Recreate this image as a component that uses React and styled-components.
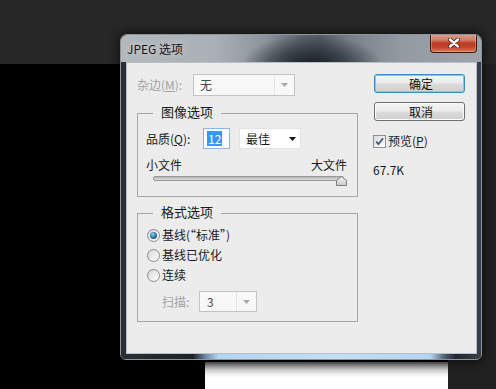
import React from "react";
import styled, { createGlobalStyle } from "styled-components";

const Global = createGlobalStyle`
  *, *::before, *::after { box-sizing: border-box; }
  html, body { margin: 0; padding: 0; background: #232323; }
  body {
    font-family: "Noto Sans CJK SC", "Noto Sans", sans-serif;
    font-size: 12px;
    color: #1a1a1a;
  }
`;

const Stage = styled.div`
  position: relative;
  width: 496px;
  height: 389px;
  overflow: hidden;
  display: flex;
  flex-direction: column;
  background: #232323;
`;

const TopBand = styled.div`
  flex: none;
  height: 64px;
  background: #272727;
`;

const MainRow = styled.div`
  flex: 1;
  display: flex;
`;

const Canvas = styled.div`
  width: 448px;
  background: #000;
  display: flex;
  flex-direction: column;
  justify-content: flex-end;
  align-items: flex-end;
`;

const Doc = styled.div`
  width: 243px;
  height: 27px;
  background: linear-gradient(
    to bottom,
    #5a5a5a 0px,
    #8e8e8e 3px,
    #cfcfcf 8px,
    #f3f3f3 13px,
    #ffffff 16px
  );
`;

const SidePanel = styled.div`
  flex: 1;
  background: #212121;
`;

const Dialog = styled.div`
  position: absolute;
  left: 120px;
  top: 34px;
  width: 362px;
  height: 326px;
  display: flex;
  flex-direction: column;
  border: 1px solid #8d949b;
  border-radius: 7px 7px 6px 6px;
  overflow: hidden;
  box-shadow: 0 0 10px 2px rgba(0, 0, 0, 0.55);
`;

const TitleBar = styled.div`
  flex: none;
  height: 27px;
  display: flex;
  align-items: flex-start;
  justify-content: space-between;
  background:
    radial-gradient(ellipse 70px 30px at 53% 110%, rgba(22, 28, 34, 0.95) 0%, rgba(38, 46, 54, 0.7) 50%, rgba(40, 48, 56, 0) 100%),
    linear-gradient(to right, #b3b8bd 0%, #aab0b5 26%, #8c939a 40%, #5f6770 50%, #555e67 55%, #78808a 64%, #939aa1 78%, #9ea4aa 100%);
`;

const TitleText = styled.span`
  align-self: center;
  padding-left: 6px;
  line-height: 16px;
  font-size: 12px;
  color: #161616;
  text-shadow: 0 0 6px rgba(255, 255, 255, 0.55);
  white-space: nowrap;
`;

const CloseButton = styled.div`
  flex: none;
  width: 47px;
  height: 19px;
  margin-top: -1px;
  margin-right: 4px;
  display: flex;
  align-items: center;
  justify-content: center;
  border: 1px solid #3e1610;
  border-top: none;
  border-radius: 0 0 4px 4px;
  background: linear-gradient(
    to bottom,
    #e0a090 0%,
    #d27a64 35%,
    #bb3c25 50%,
    #c2412a 72%,
    #dc7c58 100%
  );
  box-shadow: inset 0 0 0 1px rgba(255, 210, 190, 0.35);
`;

const Body = styled.div`
  flex: 1;
  display: flex;
  padding: 0 4px 5px 5px;
  background: linear-gradient(
    to right,
    #2b3036 0%,
    #1d2126 20%,
    #6a8aa8 23.5%,
    #b3d4f0 27%,
    #c4e0f6 60%,
    #b3d4f0 86%,
    #4d5d6d 90%,
    #22272d 93%,
    #3a4047 100%
  );
`;

const Client = styled.div`
  width: 351px;
  height: 292px;
  background: #ececec;
  border: 1px solid #b7c0c9;
  padding: 11px 10px;
  display: grid;
  grid-template-columns: 221px 91px;
  column-gap: 16px;
  align-items: start;
`;

const LeftCol = styled.div`
  display: flex;
  flex-direction: column;
`;

const RightCol = styled.div`
  display: flex;
  flex-direction: column;
`;

const FieldRow = styled.div`
  display: flex;
  align-items: center;
  height: ${(p) => p.$h}px;
  margin-top: ${(p) => p.$mt || 0}px;
  padding-left: ${(p) => p.$pl || 0}px;
`;

const Label = styled.span`
  flex: none;
  width: ${(p) => p.$w}px;
  line-height: 16px;
  white-space: nowrap;
  color: ${(p) => (p.$disabled ? "#a3a3a3" : "#1a1a1a")};
`;

const SelectBox = styled.div`
  flex: none;
  display: flex;
  width: ${(p) => p.$w}px;
  height: ${(p) => p.$h}px;
  margin-left: ${(p) => p.$ml || 0}px;
  border: 1px solid ${(p) => (p.$flat ? "#e4e4e4" : "#c3c3c3")};
  background: ${(p) => (p.$flat ? "#ffffff" : "#f8f8f8")};
`;

const SelectValue = styled.span`
  flex: 1;
  display: flex;
  align-items: center;
  padding-left: ${(p) => p.$pad}px;
  line-height: 16px;
  color: ${(p) => (p.$dim ? "#4a4a4a" : "#1a1a1a")};
`;

const SelectArrow = styled.span`
  flex: none;
  width: ${(p) => p.$w}px;
  display: flex;
  align-items: center;
  justify-content: center;
  border-left: ${(p) => (p.$sep ? "1px solid #e4e4e4" : "none")};
`;

const NumberInput = styled.div`
  flex: none;
  width: 27px;
  height: 21px;
  display: flex;
  align-items: center;
  border: 1px solid #8fb4e2;
  background: #fff;
`;

const Highlight = styled.span`
  margin-left: 3px;
  padding: 0 1px;
  line-height: 15px;
  background: #3399ff;
  color: #fff;
`;

const GroupBox = styled.div`
  position: relative;
  height: ${(p) => p.$h}px;
  margin-top: ${(p) => p.$mt}px;
  border: 1px solid #a6a6a6;
  padding: ${(p) => p.$pt}px 10px 0 8px;
`;

const GroupTitle = styled.span`
  position: absolute;
  top: -10px;
  left: 15px;
  padding: 0 8px;
  background: #ececec;
  font-size: 13px;
  line-height: 16px;
  color: #1a1a1a;
  white-space: nowrap;
`;

const SizeLabels = styled.div`
  display: flex;
  justify-content: space-between;
  height: 16px;
  margin-top: 8px;
  line-height: 16px;
`;

const Slider = styled.div`
  position: relative;
  height: 10px;
  margin: 1px 0 0 7px;
`;

const Track = styled.div`
  margin-top: 3px;
  margin-right: 3px;
  height: 5px;
  border: 1px solid #9a9a9a;
  border-radius: 2px;
  background: linear-gradient(to bottom, #b4b4b4, #dedede);
`;

const Thumb = styled.svg`
  position: absolute;
  right: 0;
  top: 0;
`;

const RadioRow = styled.div`
  display: flex;
  align-items: center;
  height: 20px;
  padding-left: 1px;
`;

const RadioDot = styled.span`
  flex: none;
  width: 13px;
  height: 13px;
  border-radius: 50%;
  border: 1px solid #8a8b8c;
  display: flex;
  align-items: center;
  justify-content: center;
  background: linear-gradient(135deg, #d6d6d6 0%, #f3f3f3 70%, #ffffff 100%);

  &::after {
    content: "";
    display: ${(p) => (p.$on ? "block" : "none")};
    width: 7px;
    height: 7px;
    border-radius: 50%;
    background: radial-gradient(circle at 40% 35%, #9fd3f2 0%, #3a86bd 40%, #1d4f78 80%, #173c5e 100%);
  }
`;

const RadioText = styled.span`
  margin-left: 2px;
  line-height: 16px;
  white-space: nowrap;
`;

const Button = styled.div`
  height: 19px;
  margin-top: ${(p) => p.$mt || 0}px;
  display: flex;
  align-items: center;
  justify-content: center;
  border: 1px solid ${(p) => (p.$default ? "#3a8cc4" : "#707070")};
  border-radius: 3px;
  background: linear-gradient(to bottom, #f4f4f4 0%, #ebebeb 48%, #dcdcdc 52%, #cfcfcf 100%);
  box-shadow: inset 0 0 0 1px ${(p) => (p.$default ? "#6fd0f6" : "#fbfbfb")};
  line-height: 16px;
  color: #111;
  padding-left: 3px;
`;

const CheckRow = styled.div`
  display: flex;
  align-items: center;
  height: 16px;
  margin-top: 12px;
  margin-left: -1px;
`;

const CheckBox = styled.span`
  flex: none;
  width: 13px;
  height: 13px;
  border: 1px solid #8e8f8f;
  background: linear-gradient(135deg, #dadada 0%, #f4f4f4 70%, #ffffff 100%);
  display: flex;
  align-items: center;
  justify-content: center;
`;

const CheckText = styled.span`
  margin-left: 2px;
  line-height: 16px;
  white-space: nowrap;
`;

const SizeText = styled.div`
  margin-top: 13px;
  margin-left: -1px;
  height: 16px;
  line-height: 16px;
  color: #1a1a1a;
`;

const Arrow = ({ color }) => (
  <svg width="7" height="4" viewBox="0 0 7 4">
    <polygon points="0,0 7,0 3.5,4" fill={color} />
  </svg>
);

export default function App() {
  return (
    <>
      <Global />
      <Stage>
        <TopBand />
        <MainRow>
          <Canvas>
            <Doc />
          </Canvas>
          <SidePanel />
        </MainRow>

        <Dialog>
          <TitleBar>
            <TitleText>JPEG 选项</TitleText>
            <CloseButton>
              <svg width="12" height="10" viewBox="0 0 12 10">
                <path d="M2 1.5 L10 8.5 M10 1.5 L2 8.5" stroke="#4a1a12" strokeWidth="4" strokeLinecap="round" />
                <path d="M2 1.5 L10 8.5 M10 1.5 L2 8.5" stroke="#ffffff" strokeWidth="2.4" strokeLinecap="round" />
              </svg>
            </CloseButton>
          </TitleBar>
          <Body>
            <Client>
              <LeftCol>
                <FieldRow $h={22}>
                  <Label $w={56} $disabled>
                    杂边(<u>M</u>):
                  </Label>
                  <SelectBox $w={102} $h={22}>
                    <SelectValue $pad={6} $dim>无</SelectValue>
                    <SelectArrow $w={20} $sep>
                      <Arrow color="#a8a8a8" />
                    </SelectArrow>
                  </SelectBox>
                </FieldRow>

                <GroupBox $h={84} $mt={17} $pt={14}>
                  <GroupTitle>图像选项</GroupTitle>
                  <FieldRow $h={21}>
                    <Label $w={57}>
                      品质(<u>Q</u>):
                    </Label>
                    <NumberInput>
                      <Highlight>12</Highlight>
                    </NumberInput>
                    <SelectBox $w={62} $h={21} $ml={9} $flat>
                      <SelectValue $pad={6}>最佳</SelectValue>
                      <SelectArrow $w={16}>
                        <Arrow color="#111" />
                      </SelectArrow>
                    </SelectBox>
                  </FieldRow>
                  <SizeLabels>
                    <span>小文件</span>
                    <span>大文件</span>
                  </SizeLabels>
                  <Slider>
                    <Track />
                    <Thumb width="11" height="10" viewBox="0 0 11 10">
                      <defs>
                        <linearGradient id="thumbg" x1="0" y1="0" x2="0" y2="1">
                          <stop offset="0" stopColor="#f6f6f6" />
                          <stop offset="1" stopColor="#c9c9c9" />
                        </linearGradient>
                      </defs>
                      <polygon
                        points="0.5,9.5 0.5,4.5 5.5,0.5 10.5,4.5 10.5,9.5"
                        fill="url(#thumbg)"
                        stroke="#7c7c7c"
                        strokeWidth="1"
                      />
                    </Thumb>
                  </Slider>
                </GroupBox>

                <GroupBox $h={109} $mt={16} $pt={11}>
                  <GroupTitle>格式选项</GroupTitle>
                  <RadioRow>
                    <RadioDot $on />
                    <RadioText>基线(“标准”)</RadioText>
                  </RadioRow>
                  <RadioRow>
                    <RadioDot />
                    <RadioText>基线已优化</RadioText>
                  </RadioRow>
                  <RadioRow>
                    <RadioDot />
                    <RadioText>连续</RadioText>
                  </RadioRow>
                  <FieldRow $h={21} $mt={6} $pl={16}>
                    <Label $w={37} $disabled>
                      扫描:
                    </Label>
                    <SelectBox $w={58} $h={21}>
                      <SelectValue $pad={7} $dim>3</SelectValue>
                      <SelectArrow $w={20} $sep>
                        <Arrow color="#a8a8a8" />
                      </SelectArrow>
                    </SelectBox>
                  </FieldRow>
                </GroupBox>
              </LeftCol>

              <RightCol>
                <Button $default>确定</Button>
                <Button $mt={9}>取消</Button>
                <CheckRow>
                  <CheckBox>
                    <svg width="9" height="9" viewBox="0 0 9 9">
                      <path d="M1.2 4.6 L3.5 7.2 L8 1.3" fill="none" stroke="#3f5787" strokeWidth="1.8" />
                    </svg>
                  </CheckBox>
                  <CheckText>
                    预览(<u>P</u>)
                  </CheckText>
                </CheckRow>
                <SizeText>67.7K</SizeText>
              </RightCol>
            </Client>
          </Body>
        </Dialog>
      </Stage>
    </>
  );
}
